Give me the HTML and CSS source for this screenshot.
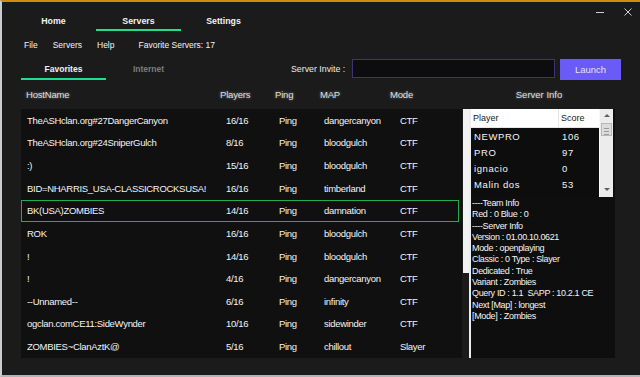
FILE: index.html
```html
<!DOCTYPE html>
<html lang="en">
<head>
    <meta charset="UTF-8">
    <title>Server Browser</title>
    <link rel="stylesheet" href="styles.css">
</head>
<body>
    <div class="window">
        <div class="titlebar">
            <div class="nav">
                <div class="nav-tab">Home</div>
                <div class="nav-tab active">Servers</div>
                <div class="nav-tab">Settings</div>
            </div>
            <div class="controls">
                <svg width="8" height="8" viewBox="0 0 8 8"><line x1="0" y1="4.5" x2="8" y2="4.5" stroke="#cfcfcf" stroke-width="1"/></svg>
                <svg width="8" height="8" viewBox="0 0 8 8"><path d="M0.5 0.5 L7.5 7.5 M7.5 0.5 L0.5 7.5" stroke="#cfcfcf" stroke-width="1" fill="none"/></svg>
            </div>
        </div>

        <div class="menubar">
            <span class="menu-item">File</span>
            <span class="menu-item">Servers</span>
            <span class="menu-item">Help</span>
            <span class="fav-count">Favorite Servers: 17</span>
        </div>

        <div class="toolbar">
            <div class="subtabs">
                <div class="subtab active">Favorites</div>
                <div class="subtab">Internet</div>
            </div>
            <div class="invite-label">Server Invite :</div>
            <div class="invite-input"></div>
            <div class="launch">Launch</div>
        </div>

        <div class="content">
            <div class="servers">
                <div class="servers-head">
                    <span>HostName</span>
                    <span>Players</span>
                    <span>Ping</span>
                    <span>MAP</span>
                    <span>Mode</span>
                </div>
                <div class="servers-body">
                    <div class="row"><span class="clip">TheASHclan.org#27DangerCanyon</span><span>16/16</span><span class="clip">Ping</span><span>dangercanyon</span><span>CTF</span></div>
                    <div class="row"><span class="clip">TheASHclan.org#24SniperGulch</span><span>8/16</span><span class="clip">Ping</span><span>bloodgulch</span><span>CTF</span></div>
                    <div class="row"><span class="clip">:)</span><span>15/16</span><span class="clip">Ping</span><span>bloodgulch</span><span>CTF</span></div>
                    <div class="row"><span class="clip">BID=NHARRIS_USA-CLASSICROCKSUSA!</span><span>16/16</span><span class="clip">Ping</span><span>timberland</span><span>CTF</span></div>
                    <div class="row selected"><span class="clip">BK(USA)ZOMBIES</span><span>14/16</span><span class="clip">Ping</span><span>damnation</span><span>CTF</span></div>
                    <div class="row"><span class="clip">ROK</span><span>16/16</span><span class="clip">Ping</span><span>bloodgulch</span><span>CTF</span></div>
                    <div class="row"><span class="clip">!</span><span>14/16</span><span class="clip">Ping</span><span>bloodgulch</span><span>CTF</span></div>
                    <div class="row"><span class="clip">!</span><span>4/16</span><span class="clip">Ping</span><span>dangercanyon</span><span>CTF</span></div>
                    <div class="row"><span class="clip">--Unnamed--</span><span>6/16</span><span class="clip">Ping</span><span>infinity</span><span>CTF</span></div>
                    <div class="row"><span class="clip">ogclan.comCE11:SideWynder</span><span>10/16</span><span class="clip">Ping</span><span>sidewinder</span><span>CTF</span></div>
                    <div class="row"><span class="clip">ZOMBIES~ClanAztK@</span><span>5/16</span><span class="clip">Ping</span><span>chillout</span><span>Slayer</span></div>
                </div>
            </div>

            <div class="info">
                <div class="info-title">Server Info</div>
                <div class="info-box">
                    <div class="info-edge"><div class="edge-fill"></div></div>
                    <div class="info-main">
                        <div class="players">
                            <div class="players-list">
                                <div class="players-head">
                                    <span>Player</span>
                                    <span>Score</span>
                                </div>
                                <div class="players-body">
                                    <div class="player"><span>NEWPRO</span><span>106</span></div>
                                    <div class="player"><span>PRO</span><span>97</span></div>
                                    <div class="player"><span>ignacio</span><span>0</span></div>
                                    <div class="player"><span>Malin dos</span><span>53</span></div>
                                </div>
                            </div>
                            <div class="scrollbar">
                                <div class="arrow up"></div>
                                <div class="thumb"></div>
                                <div class="arrow down"></div>
                            </div>
                        </div>
                        <div class="details">----Team Info
Red : 0 Blue : 0
----Server Info
Version : 01.00.10.0621
Mode : openplaying
Classic : 0 Type : Slayer
Dedicated : True
Variant : Zombies
Query ID : 1.1  SAPP : 10.2.1 CE
Next [Map] : longest
[Mode] : Zombies</div>
                    </div>
                </div>
            </div>
        </div>
    </div>
</body>
</html>
```

FILE: styles.css
```css
* {
    margin: 0;
    padding: 0;
    box-sizing: border-box;
}

body {
    font-family: 'Liberation Sans', Arial, sans-serif;
    background: #1b1b1b;
    color: #ececec;
    font-size: 9px;
}

.window {
    height: 377px;
    border-top: 2px solid #d4890f;
    border-left: 2px solid #c9cdd2;
    border-bottom: 2px solid #b2b4b6;
    background: #1b1b1b;
    display: flex;
    flex-direction: column;
}

/* title bar with main tabs */
.titlebar {
    display: flex;
    height: 29px;
    padding-left: 9px;
}

.nav {
    display: flex;
}

.nav-tab {
    width: 85px;
    padding: 12px 0 1px;
    line-height: 14px;
    text-align: center;
    font-weight: bold;
    font-size: 8.8px;
    color: #f2f2f2;
    border-bottom: 2px solid transparent;
}

.nav-tab.active {
    border-bottom-color: #1ee08c;
}

.controls {
    margin-left: auto;
    height: 20px;
    display: flex;
    align-items: center;
    gap: 20px;
    padding-right: 8px;
}

.controls svg {
    display: block;
}

/* menu */
.menubar {
    height: 26px;
    display: flex;
    padding: 7px 0 0 22px;
    line-height: 14px;
    font-size: 8.5px;
    color: #f4f4f4;
}

.menu-item {
    margin-right: 15px;
}

.fav-count {
    margin-left: 9px;
}

/* favourites / internet + invite */
.toolbar {
    height: 24px;
    display: flex;
    align-items: flex-start;
}

.subtabs {
    display: flex;
    margin-left: 19px;
}

.subtab {
    width: 85px;
    padding: 5px 0 2px;
    line-height: 14px;
    text-align: center;
    font-weight: bold;
    font-size: 8.5px;
    color: #7b7b7b;
    border-bottom: 2px solid transparent;
}

.subtab.active {
    color: #f2f2f2;
    border-bottom-color: #1ee08c;
}

.invite-label {
    margin-left: 100px;
    width: 61px;
    padding-top: 5px;
    line-height: 14px;
    font-size: 8.8px;
}

.invite-input {
    margin-top: 2px;
    width: 203px;
    height: 19px;
    background: #0d0d10;
    border: 1px solid #3c3474;
}

.launch {
    margin-top: 2px;
    margin-left: 5px;
    width: 61px;
    height: 21px;
    line-height: 21px;
    background: #6a5af6;
    color: #e4e0ff;
    text-align: center;
    font-size: 9.5px;
}

/* server list + info */
.content {
    display: flex;
    padding-top: 5px;
}

.servers {
    margin-left: 19px;
    width: 441px;
}

.servers-head,
.info-title {
    height: 23px;
    line-height: 18px;
    font-size: 9.5px;
    color: #dedede;
    text-shadow: 0 0 3px rgba(255, 255, 255, 0.45);
}

.servers-head {
    display: grid;
    grid-template-columns: 194px 55px 45px 70px 1fr;
    padding-left: 5px;
    letter-spacing: -0.2px;
}

.servers-body {
    height: 249px;
    background: #101010;
}

.row {
    height: 22.64px;
    display: grid;
    grid-template-columns: 199px 53px 45px 76px 1fr;
    align-items: center;
    padding-left: 5px;
    font-size: 9.5px;
    letter-spacing: -0.3px;
    color: #f4f4f4;
    border: 1px solid transparent;
}

.row span {
    height: 11px;
    line-height: 11px;
    white-space: nowrap;
}

.row .clip {
    overflow: hidden;
}

.row.selected {
    border-color: #22ad4f;
    margin-right: 3px;
}

.info {
    width: 152px;
    margin-left: 1px;
}

.info-title {
    text-align: center;
}

.info-box {
    display: flex;
    height: 249px;
}

.info-edge {
    width: 6px;
}

.edge-fill {
    height: 164px;
    background: #f2f2f2;
}

.info-main {
    flex: 1;
    background: #0e0e0e;
    border-left: 2px solid #ededed;
}

.players {
    display: flex;
    height: 88px;
    margin-right: 2px;
}

.players-list {
    flex: 1;
    display: flex;
    flex-direction: column;
}

.players-head {
    height: 19px;
    display: grid;
    grid-template-columns: 85px 1fr;
    background: #ffffff;
    color: #1a1a1a;
    line-height: 18px;
    font-size: 9px;
    padding-left: 2px;
    border-bottom: 1px solid #e6e6e6;
}

.players-head span + span {
    border-left: 1px solid #e6e6e6;
    padding-left: 2px;
}

.players-body {
    flex: 1;
    padding-top: 1px;
    background: #0d0d0d;
}

.player {
    height: 16px;
    line-height: 16px;
    display: grid;
    grid-template-columns: 85px 1fr;
    padding-left: 3px;
    font-size: 9.5px;
    letter-spacing: 0.6px;
    color: #f4f4f4;
}

.player span + span {
    padding-left: 3px;
}

.scrollbar {
    width: 14px;
    background: #ececec;
    border-left: 1px solid #f8f8f8;
    display: flex;
    flex-direction: column;
    align-items: center;
}

.arrow {
    width: 0;
    height: 0;
    border-left: 3px solid transparent;
    border-right: 3px solid transparent;
}

.arrow.up {
    margin-top: 5px;
    border-bottom: 3px solid #606060;
}

.arrow.down {
    margin-top: auto;
    margin-bottom: 6px;
    border-top: 3px solid #606060;
}

.thumb {
    margin-top: 6px;
    width: 11px;
    height: 13px;
    background: #dcdcdc;
    border: 1px solid #b8b8b8;
    background-image: repeating-linear-gradient(#dcdcdc 0 2px, #9a9a9a 2px 3px);
    background-size: 5px 9px;
    background-position: center 2px;
    background-repeat: no-repeat;
}

.details {
    padding: 1px 0 0 1px;
    white-space: pre;
    font-size: 9px;
    line-height: 11.3px;
    letter-spacing: -0.35px;
    color: #f4f4f4;
}
```
